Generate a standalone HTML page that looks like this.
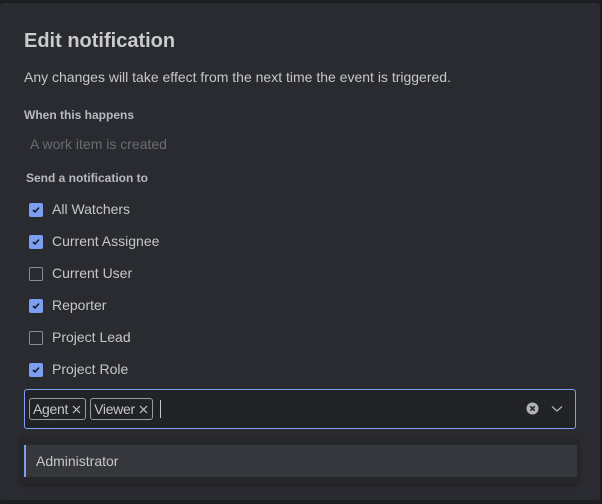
<!DOCTYPE html>
<html><head><meta charset="utf-8"><style>
*{box-sizing:border-box;margin:0;padding:0}
body{width:602px;height:504px;background:#1c1d20;font-family:"Liberation Sans",sans-serif;color:#c5c7cb;overflow:hidden;position:relative}
.modal{position:absolute;left:0;top:3px;width:600px;height:497px;background:#2a2b30;border-radius:3px}
.t{position:absolute;left:24px;top:27px;font-size:20px;font-weight:bold;color:#c9cbcf}
.sub{position:absolute;left:24px;top:66px;font-size:14px;color:#c5c7cb}
.lbl{position:absolute;left:24px;font-size:12px;font-weight:bold;color:#b8bac0}
.ph{position:absolute;left:30px;top:133px;font-size:14px;color:#6a6c72}
.cb{position:absolute;left:29px;width:14px;height:14px;border-radius:2px}
.on{background:#7b9ff2}
.off{border:1px solid #8a8c92}
.cb svg{position:absolute;left:2px;top:2px}
.ci{position:absolute;left:52px;font-size:14px;color:#c5c7cb}
.sel{position:absolute;left:24px;top:389px;width:552px;height:40px;border:1.5px solid #7b9ff2;border-radius:3px;background:#222327}
.tags{position:absolute;left:4px;top:8px;display:flex;gap:4px;align-items:center}
.tag{height:22px;border:1px solid #9a9ca2;border-radius:3px;font-size:14px;line-height:20px;padding:0 4px 0 3px;color:#c5c7cb;display:flex;align-items:center;gap:4px;letter-spacing:-0.3px}
.caret{width:1px;height:18px;background:#c5c7cb;margin-left:3px}
.drop{position:absolute;left:21px;top:437px;width:557px;height:47px;background:#26272b;border-radius:4px;box-shadow:0 2px 4px rgba(0,0,0,.3)}
.opt{position:absolute;left:3px;top:8px;width:553px;height:32px;background:#36373c;border-left:2px solid #7b9ff2;font-size:14px;line-height:32px;padding-left:10px;color:#c5c7cb}
</style></head><body>
<div class="modal">
<div class="t">Edit notification</div>
<div class="sub">Any changes will take effect from the next time the event is triggered.</div>
<div class="lbl" style="top:105px">When this happens</div>
<div class="ph">A work item is created</div>
<div class="lbl" style="top:168px;left:26px">Send a notification to</div>

<div class="cb on" style="top:200px"><svg width="10" height="10" viewBox="0 0 10 10"><path d="M2 5l2 2 4-4.5" stroke="#1c1d20" stroke-width="1.6" fill="none"/></svg></div><div class="ci" style="top:198px">All Watchers</div>
<div class="cb on" style="top:232px"><svg width="10" height="10" viewBox="0 0 10 10"><path d="M2 5l2 2 4-4.5" stroke="#1c1d20" stroke-width="1.6" fill="none"/></svg></div><div class="ci" style="top:230px">Current Assignee</div>
<div class="cb off" style="top:264px"></div><div class="ci" style="top:262px">Current User</div>
<div class="cb on" style="top:296px"><svg width="10" height="10" viewBox="0 0 10 10"><path d="M2 5l2 2 4-4.5" stroke="#1c1d20" stroke-width="1.6" fill="none"/></svg></div><div class="ci" style="top:294px">Reporter</div>
<div class="cb off" style="top:328px"></div><div class="ci" style="top:326px">Project Lead</div>
<div class="cb on" style="top:360px"><svg width="10" height="10" viewBox="0 0 10 10"><path d="M2 5l2 2 4-4.5" stroke="#1c1d20" stroke-width="1.6" fill="none"/></svg></div><div class="ci" style="top:358px">Project Role</div>
</div>

<div class="sel">
<div class="tags">
<div class="tag">Agent<svg width="9" height="9" viewBox="0 0 9 9"><path d="M1 1l7 7M8 1l-7 7" stroke="#c5c7cb" stroke-width="1.2"/></svg></div>
<div class="tag">Viewer<svg width="9" height="9" viewBox="0 0 9 9"><path d="M1 1l7 7M8 1l-7 7" stroke="#c5c7cb" stroke-width="1.2"/></svg></div>
<div class="caret"></div>
</div>
<svg style="position:absolute;left:501px;top:12px" width="13" height="13" viewBox="0 0 13 13"><circle cx="6.5" cy="6.5" r="6" fill="#b0b2b8"/><path d="M4.3 4.3l4.4 4.4M8.7 4.3l-4.4 4.4" stroke="#222327" stroke-width="1.5"/></svg>
<svg style="position:absolute;left:526px;top:15px" width="12" height="8" viewBox="0 0 12 8"><path d="M1 1.5l5 4.5 5-4.5" stroke="#b0b2b8" stroke-width="1.3" fill="none"/></svg>
</div>

<div class="drop"><div class="opt">Administrator</div></div>
</body></html>
